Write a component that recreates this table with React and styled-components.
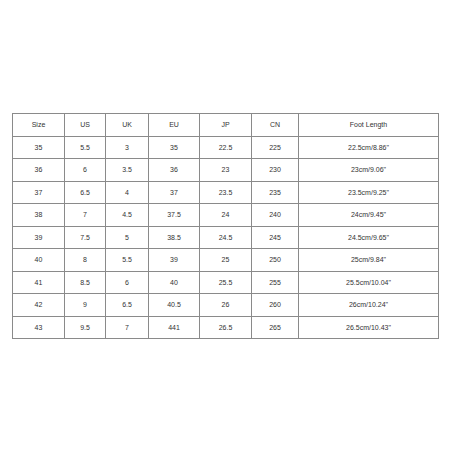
import React from 'react';
import styled, { createGlobalStyle } from 'styled-components';

const GlobalStyle = createGlobalStyle`
  html, body {
    margin: 0;
    padding: 0;
    background: #fff;
  }
  body {
    font-family: "Liberation Sans", Arial, sans-serif;
  }
`;

const Page = styled.div`
  width: 450px;
  height: 450px;
  padding: 113px 12px 0;
  box-sizing: border-box;
`;

const Table = styled.table`
  width: 426px;
  border-collapse: collapse;
  table-layout: fixed;
  border: 1px solid #8a8a8a;
`;

const Cell = styled.td`
  height: 21.5px;
  padding: 0;
  border: 1px solid #8a8a8a;
  text-align: center;
  vertical-align: middle;
  font-size: 7px;
  color: #333;
  line-height: 1;
`;

const widths = [52, 41, 43, 51, 52, 47, 140];

const header = ['Size', 'US', 'UK', 'EU', 'JP', 'CN', 'Foot Length'];

const rows = [
  ['35', '5.5', '3', '35', '22.5', '225', '22.5cm/8.86"'],
  ['36', '6', '3.5', '36', '23', '230', '23cm/9.06"'],
  ['37', '6.5', '4', '37', '23.5', '235', '23.5cm/9.25"'],
  ['38', '7', '4.5', '37.5', '24', '240', '24cm/9.45"'],
  ['39', '7.5', '5', '38.5', '24.5', '245', '24.5cm/9.65"'],
  ['40', '8', '5.5', '39', '25', '250', '25cm/9.84"'],
  ['41', '8.5', '6', '40', '25.5', '255', '25.5cm/10.04"'],
  ['42', '9', '6.5', '40.5', '26', '260', '26cm/10.24"'],
  ['43', '9.5', '7', '441', '26.5', '265', '26.5cm/10.43"'],
];

const App = () => {
  return (
    <Page>
      <GlobalStyle />
      <Table>
        <colgroup>
          {widths.map((w, i) => (
            <col key={i} style={{ width: w }} />
          ))}
        </colgroup>
        <tbody>
          <tr>
            {header.map((h) => (
              <Cell key={h}>{h}</Cell>
            ))}
          </tr>
          {rows.map((r) => (
            <tr key={r[0]}>
              {r.map((c, i) => (
                <Cell key={i}>{c}</Cell>
              ))}
            </tr>
          ))}
        </tbody>
      </Table>
    </Page>
  );
};

export default App;
